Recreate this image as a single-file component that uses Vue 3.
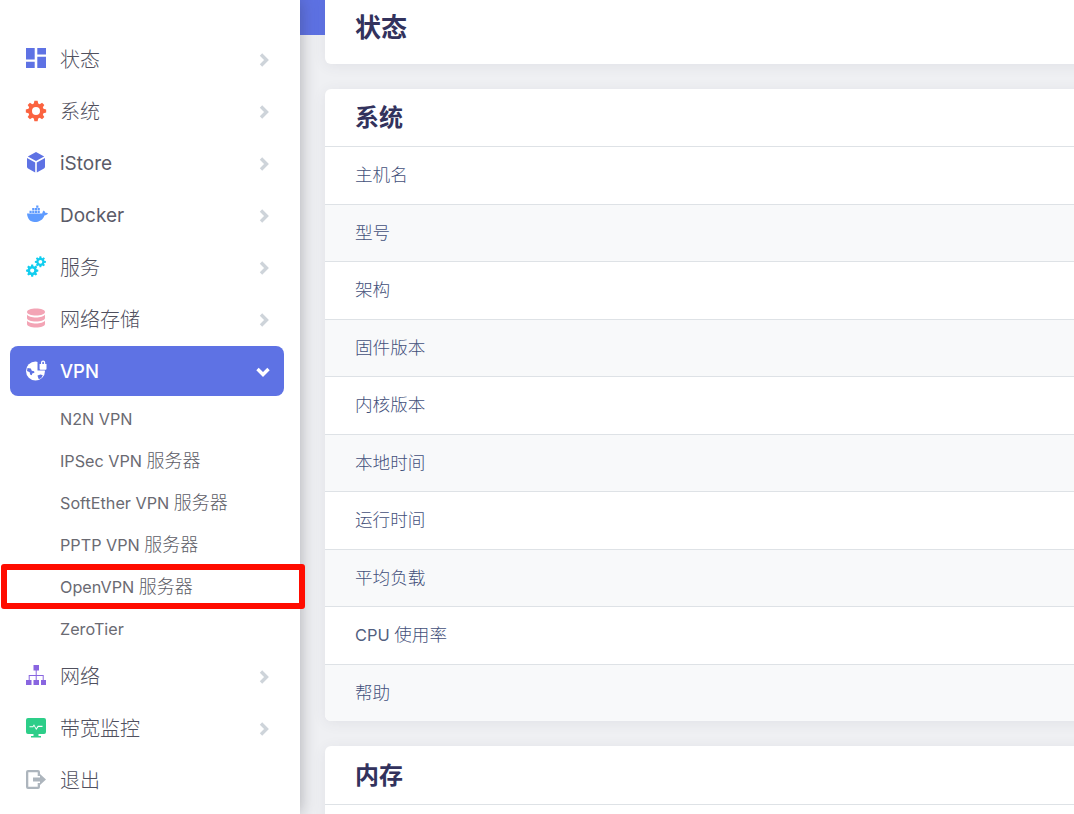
<script setup>
function gear(cx, cy, ro, ri, hole, teeth) {
  let d = ''
  const step = (Math.PI * 2) / teeth
  for (let i = 0; i < teeth; i++) {
    const a = i * step - Math.PI / 2
    const pts = [
      [ri, a - step * 0.36],
      [ro, a - step * 0.2],
      [ro, a + step * 0.2],
      [ri, a + step * 0.36]
    ]
    pts.forEach(([r, t], j) => {
      const x = (cx + r * Math.cos(t)).toFixed(2)
      const y = (cy + r * Math.sin(t)).toFixed(2)
      d += (i === 0 && j === 0 ? 'M' : 'L') + x + ' ' + y
    })
  }
  d += `Z M${cx - hole} ${cy} a${hole} ${hole} 0 1 0 ${hole * 2} 0 a${hole} ${hole} 0 1 0 ${-hole * 2} 0Z`
  return d
}

const icons = {
  dash: [{ d: 'M0 -1h8.700v11.500H0zM0 12.800h8.700v6.200H0zM11.300 -1H20v6.500h-8.700zM11.300 7.800H20V19h-8.700z', c: '#5e72e4' }],
  gear: [{ d: gear(10, 10, 10.3, 7.8, 4, 8), c: '#fb6340' }],
  cube: [{ d: 'M10 -1l8.200 4.400L10 7.900 1.800 3.400zM1 5l8.200 4.500V19.500L2 15.500a2 2 0 0 1-1-1.700zM19 5l-8.200 4.500V19.500l7.200-4a2 2 0 0 0 1-1.700z', c: '#5e72e4' }],
  docker: [
    { d: 'M1 8.600h15.200c.2-1.200.7-2.300 1.500-3 .8.500 1.400 1.200 1.500 2.200 1-.2 2-.1 2.800.5-.8 1.500-2 2.100-3.600 2.100C17.200 14.500 13.500 17 8.500 17 4 17 1.500 14 1 8.600z', c: '#5e9bff' },
    { d: 'M3.500 5.800h2.200v2.200H3.500zM6.200 5.800h2.200v2.200H6.200zM8.900 5.800h2.200v2.200H8.900zM11.600 5.800h2.200v2.200h-2.200zM6.200 3.100h2.200v2.200H6.200zM8.900 3.100h2.200v2.200H8.900zM11.600 3.100h2.200v2.200h-2.200zM10.200 0.500h2.200v2.200h-2.200z', c: '#5e9bff' }
  ],
  services: [
    { d: gear(6.2, 13.6, 6.2, 4.6, 2.1, 8), c: '#11cdef' },
    { d: gear(14.4, 4.8, 5.6, 4.1, 1.9, 8), c: '#11cdef' }
  ],
  db: [
    { d: 'M1 3c0-2 4-3.500 9-3.500S19 1 19 3s-4 3.500-9 3.500S1 5 1 3z', c: '#f3a4b5' },
    { d: 'M1 5.400c1 2 5 3 9 3s8-1 9-3V9c0 2-4 3.500-9 3.500S1 11 1 9z', c: '#f3a4b5' },
    { d: 'M1 11.400c1 2 5 3 9 3s8-1 9-3V15c0 2-4 3.500-9 3.500S1 17 1 15z', c: '#f3a4b5' }
  ],
  vpn: [
    { d: 'M9.500 0.500a9.500 9.500 0 1 0 0 19 9.500 9.500 0 0 0 0-19z', c: '#fff' },
    { d: 'M1.500 7l3.300.6 1 2.200 2.300.5.300 1.400-2.200.9-.4 1.700-1.700-.9-.4-2.200L1 10zM11.500 14.500l3-1 2.300.8-1.500 2.800-2.500 1.200-.8-2z', c: '#5e72e4' },
    { d: 'M11.500 -1h10v10.500h-10z', c: '#5e72e4' },
    { d: 'M13.600 3h6.900v4.800a1 1 0 0 1-1 1h-4.900a1 1 0 0 1-1-1zM15 3V1.600a2.100 2.100 0 0 1 4.200 0V3h-1.300V1.600a.800.800 0 0 0-1.600 0V3z', c: '#fff' }
  ],
  net: [
    { d: 'M7.500 -1h5.500v5.500H7.500zM0 14h5.500v5H0zM7.500 14h5.500v5H7.500zM15 14h5v5h-5zM9.700 4.500h1v4.500h7v5h-1V10h-6v4h-1v-4h-6v4h-1V9h7z', c: '#8965e0' }
  ],
  monitor: [
    { d: 'M2 0h16a2 2 0 0 1 2 2v12a2 2 0 0 1-2 2h-5.500v2H15v1.500H5V18h2.500v-2H2a2 2 0 0 1-2-2V2a2 2 0 0 1 2-2z', c: '#2dce89' },
    { d: 'M3.500 8.200h3.200l1.300-2 2.200 4 1.600-2.400h4.700v1.100h-4.100l-2.200 3.200-2.200-4-.8 1.200H3.500z', c: '#fff' }
  ],
  logout: [
    { d: 'M2 0h10a2 2 0 0 1 2 2v4h-2.300V2.300H2.300v14.400h9.400V13H14v4a2 2 0 0 1-2 2H2a2 2 0 0 1-2-2V2a2 2 0 0 1 2-2z', c: '#adb5bd' },
    { d: 'M7 7.500h7V4l6 5.500-6 5.500v-3.500H7z', c: '#adb5bd' }
  ]
}

const menuTop = [
  { label: '状态', icon: 'dash' },
  { label: '系统', icon: 'gear' },
  { label: 'iStore', icon: 'cube', latin: true },
  { label: 'Docker', icon: 'docker', latin: true },
  { label: '服务', icon: 'services' },
  { label: '网络存储', icon: 'db' }
]
const subItems = [
  ['N2N VPN', ''],
  ['IPSec VPN ', '服务器'],
  ['SoftEther VPN ', '服务器'],
  ['PPTP VPN ', '服务器'],
  ['OpenVPN ', '服务器'],
  ['ZeroTier', '']
]
const menuBottom = [
  { label: '网络', icon: 'net', arrow: true },
  { label: '带宽监控', icon: 'monitor', arrow: true },
  { label: '退出', icon: 'logout', arrow: false }
]
const sysRows = [
  ['', '主机名'], ['', '型号'], ['', '架构'], ['', '固件版本'], ['', '内核版本'],
  ['', '本地时间'], ['', '运行时间'], ['', '平均负载'], ['CPU ', '使用率'], ['', '帮助']
]
</script>

<template>
  <div class="page">
    <aside class="sidebar">
      <div v-for="m in menuTop" :key="m.label" class="item">
        <svg class="icon" viewBox="0 0 20 20"><path v-for="(p, i) in icons[m.icon]" :key="i" :d="p.d" :fill="p.c" fill-rule="evenodd" /></svg>
        <span class="label" :class="{ latin: m.latin }">{{ m.label }}</span>
        <svg class="chev" viewBox="0 0 10 14"><path d="M2 1.500L7.500 7 2 12.500" fill="none" stroke="#ced4da" stroke-width="3.400" /></svg>
      </div>
      <div class="item active">
        <svg class="icon" viewBox="0 0 20 20"><path v-for="(p, i) in icons.vpn" :key="i" :d="p.d" :fill="p.c" fill-rule="evenodd" /></svg>
        <span class="label latin">VPN</span>
        <svg class="chev down" viewBox="0 0 14 10"><path d="M1.500 2L7 7.500 12.500 2" fill="none" stroke="#fff" stroke-width="3.400" /></svg>
      </div>
      <div class="sub">
        <div v-for="s in subItems" :key="s[0]" class="sub-item">{{ s[0] }}<span class="cjk">{{ s[1] }}</span></div>
      </div>
      <div v-for="m in menuBottom" :key="m.label" class="item">
        <svg class="icon" viewBox="0 0 20 20"><path v-for="(p, i) in icons[m.icon]" :key="i" :d="p.d" :fill="p.c" fill-rule="evenodd" /></svg>
        <span class="label">{{ m.label }}</span>
        <svg v-if="m.arrow" class="chev" viewBox="0 0 10 14"><path d="M2 1.500L7.500 7 2 12.500" fill="none" stroke="#ced4da" stroke-width="3.400" /></svg>
      </div>
      <div class="highlight"></div>
    </aside>

    <main class="main">
      <section class="card first">
        <h2 class="title-lg">状态</h2>
      </section>
      <section class="card">
        <h3 class="title">系统</h3>
        <div v-for="r in sysRows" :key="r[1]" class="row"><span class="row-latin">{{ r[0] }}</span>{{ r[1] }}</div>
      </section>
      <section class="card">
        <h3 class="title tall">内存</h3>
        <div class="row"></div>
      </section>
    </main>
  </div>
</template>

<style>
html, body { margin: 0; overflow: hidden; }
</style>

<style scoped>
.page {
  display: flex;
  width: 1074px;
  height: 814px;
  overflow: hidden;
  font-family: "Inter", "Noto Sans CJK SC", sans-serif;
  background: #eff0f3;
}
.sidebar {
  position: relative;
  z-index: 2;
  flex: 0 0 300px;
  box-sizing: border-box;
  padding: 34px 16px 0 10px;
  background: #fff;
  box-shadow: 0 0 16px rgba(40, 40, 50, 0.35);
}
.item {
  display: flex;
  align-items: center;
  height: 50px;
  margin-bottom: 2px;
  padding: 0 16px;
  gap: 14px;
  border-radius: 8px;
  color: #50505e;
  font-size: 20px;
  font-weight: 300;
}
.label { flex: 1; line-height: 1; padding-top: 2px; }
.latin { font-size: 19px; font-weight: 400; padding-top: 0; color: #5b5b68; }
.icon { width: 20px; height: 20px; flex: none; overflow: visible; }
.chev { width: 10px; height: 14px; flex: none; margin: 2px -1px 0 0; }
.chev.down { width: 14px; height: 10px; margin-right: -2px; }
.active {
  background: #5e72e4;
  color: #fff;
}
.active .latin { font-weight: 500; font-size: 18.5px; color: #fff; }
.sub { margin: -1px 0 2px; }
.sub-item {
  height: 42px;
  line-height: 43px;
  padding-left: 50px;
  color: #6a6a72;
  font-size: 16.2px;
}
.cjk { font-size: 18px; font-weight: 300; color: #5c5c66; }
.highlight {
  position: absolute;
  left: 1px;
  top: 564px;
  width: 292px;
  height: 33px;
  border: 6px solid #ff0c00;
  border-radius: 3px;
}
.main {
  flex: 1;
  min-width: 0;
  padding-left: 25px;
  background: linear-gradient(#5e72e4 35px, transparent 35px);
}
.card {
  width: 900px;
  margin-bottom: 25px;
  background: #fff;
  border-radius: 6px;
  box-shadow: 0 2px 14px rgba(60, 60, 90, 0.08);
}
.first {
  margin-top: -10px;
  height: 74px;
}
.title-lg {
  margin: 0;
  padding: 10px 0 0 30px;
  height: 54px;
  line-height: 56px;
  font-size: 26px;
  font-weight: 700;
  color: #32325d;
}
.title {
  margin: 0;
  box-sizing: border-box;
  height: 58px;
  line-height: 57px;
  padding-left: 30px;
  font-size: 24px;
  font-weight: 700;
  color: #32325d;
  border-bottom: 1px solid #dee2e6;
}
.title.tall { height: 59px; line-height: 59px; }
.row {
  box-sizing: border-box;
  height: 57.5px;
  line-height: 56px;
  padding-left: 30px;
  font-size: 17.6px;
  font-weight: 300;
  color: #43507a;
  border-bottom: 1px solid #dee2e6;
}
.row-latin { font-size: 16.4px; font-weight: 400; color: #525f7f; }
.row:nth-of-type(even) { background: #f8f9fa; }
.row:last-child { height: 56.5px; border-bottom: 0; border-radius: 0 0 6px 6px; }
</style>
